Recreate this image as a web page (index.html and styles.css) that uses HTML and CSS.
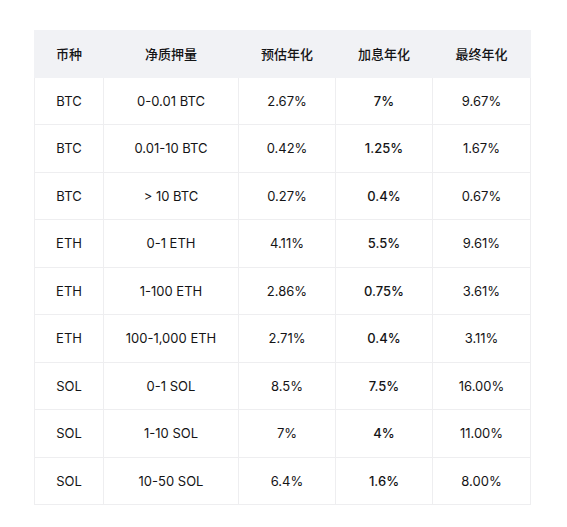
FILE: index.html
```html
<!DOCTYPE html>
<html lang="zh">
<head>
<meta charset="utf-8">
<link rel="stylesheet" href="styles.css">
</head>
<body>
<div class="wrap">
<table class="rates">
  <colgroup>
    <col class="c1"><col class="c2"><col class="c3"><col class="c4"><col class="c5">
  </colgroup>
  <thead>
    <tr><th>币种</th><th>净质押量</th><th>预估年化</th><th>加息年化</th><th>最终年化</th></tr>
  </thead>
  <tbody>
    <tr><td>BTC</td><td>0-0.01 BTC</td><td>2.67%</td><td class="boost">7%</td><td>9.67%</td></tr>
    <tr><td>BTC</td><td>0.01-10 BTC</td><td>0.42%</td><td class="boost">1.25%</td><td>1.67%</td></tr>
    <tr><td>BTC</td><td>&gt; 10 BTC</td><td>0.27%</td><td class="boost">0.4%</td><td>0.67%</td></tr>
    <tr><td>ETH</td><td>0-1 ETH</td><td>4.11%</td><td class="boost">5.5%</td><td>9.61%</td></tr>
    <tr><td>ETH</td><td>1-100 ETH</td><td>2.86%</td><td class="boost">0.75%</td><td>3.61%</td></tr>
    <tr><td>ETH</td><td>100-1,000 ETH</td><td>2.71%</td><td class="boost">0.4%</td><td>3.11%</td></tr>
    <tr><td>SOL</td><td>0-1 SOL</td><td>8.5%</td><td class="boost">7.5%</td><td>16.00%</td></tr>
    <tr><td>SOL</td><td>1-10 SOL</td><td>7%</td><td class="boost">4%</td><td>11.00%</td></tr>
    <tr><td>SOL</td><td>10-50 SOL</td><td>6.4%</td><td class="boost">1.6%</td><td>8.00%</td></tr>
  </tbody>
</table>
</div>
</body>
</html>
```
FILE: styles.css
```css
html, body {
  margin: 0;
  padding: 0;
  background: #ffffff;
}
body {
  font-family: Inter, "Noto Sans CJK SC", sans-serif;
  font-size: 13px;
  color: #141416;
}
.wrap {
  padding: 30px 0 0 34px;
}
.rates {
  width: 496px;
  border-collapse: collapse;
  table-layout: fixed;
}
.c1 { width: 69px; }
.c2 { width: 135px; }
.c3 { width: 97px; }
.c4 { width: 97px; }
.c5 { width: 98px; }
.rates th {
  background: #f1f2f5;
  font-weight: 500;
  line-height: 20px;
  padding: 13px 0 13px;
  text-align: center;
  border: 1px solid #f1f2f5;
}
.rates td {
  line-height: 20.44px;
  padding: 13px 0;
  text-align: center;
  border: 1px solid #eeeef0;
}
.rates td.boost {
  font-weight: 500;
}
```
